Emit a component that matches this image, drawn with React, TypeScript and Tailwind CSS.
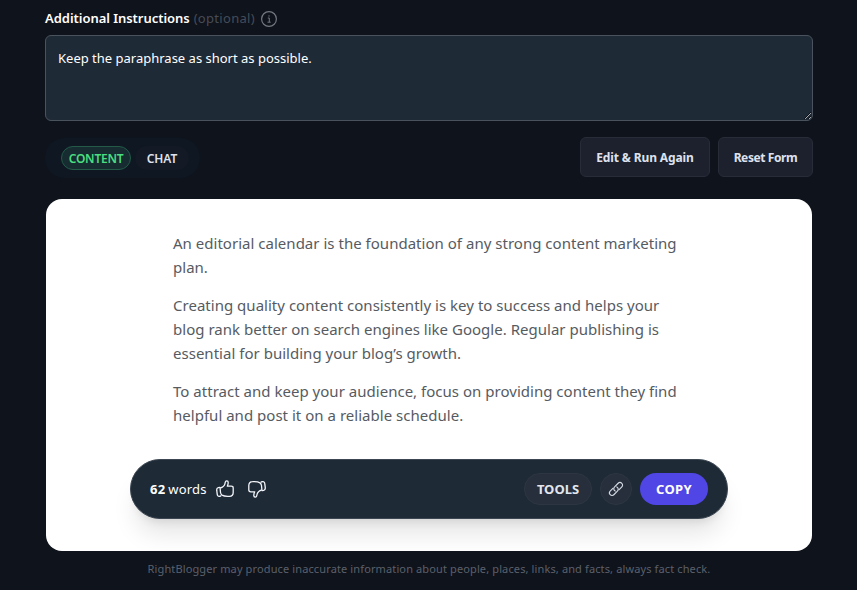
import React from 'react';

const paragraphs = [
  ['An editorial calendar is the foundation of any strong content marketing', 'plan.'],
  [
    'Creating quality content consistently is key to success and helps your',
    'blog rank better on search engines like Google. Regular publishing is',
    'essential for building your blog’s growth.',
  ],
  [
    'To attract and keep your audience, focus on providing content they find',
    'helpful and post it on a reliable schedule.',
  ],
];

function InfoIcon() {
  return (
    <svg className="ml-[6px] h-4 w-4" viewBox="0 0 16 16" fill="none" stroke="#74787f">
      <circle cx="8" cy="8" r="7.4" strokeWidth="1.2" />
      <path d="M6.8 7h1.500v4M6.500 11.200h3.200M8 4.300v1.300" />
    </svg>
  );
}

function ThumbIcon({ down = false }: { down?: boolean }) {
  return (
    <svg
      className={down ? 'h-[18px] w-[18px] rotate-180' : 'h-[18px] w-[18px]'}
      viewBox="0 0 18 18"
      fill="none"
      stroke="#f1f4f8"
      strokeWidth="1.3"
      strokeLinejoin="round"
      strokeLinecap="round"
    >
      <path d="M3.900 7.400 2.300 7.700C.9 8 .6 8.900.7 10.200l.5 4c.2 1.500.9 2.300 2.200 2.100l1.400-.3" />
      <path d="M4.100 8.100c2.600-.9 4.300-2.200 4.800-4.300l.4-1.700c.4-1.700 2.800-1.500 2.900.3.100 1.300-.3 2.500-.9 3.800h3.900c1.400 0 2 .8 2 1.700v4.500c0 2.400-1.300 3.800-3.700 3.900-2.900.2-5.600 0-7.500-1.200-1-.7-1.300-1.400-1.500-2.600Z" />
    </svg>
  );
}

function LinkIcon() {
  return (
    <svg className="h-4 w-4" viewBox="0 0 16 16" fill="none" stroke="#d5dae3" strokeWidth="1.15" strokeLinecap="round">
      <path d="M7.200 10.100C5.700 9.400 5.200 7.200 6.600 5.800l3.300-3.300c1.200-1.200 2.900-1.200 3.900-.2s1 2.700-.2 3.900l-2.500 2.500" />
      <path d="M8.800 5.900c1.500.7 2 2.900.6 4.300l-3.300 3.300c-1.200 1.200-2.900 1.200-3.900.2s-1-2.700.2-3.900l2.500-2.500" />
    </svg>
  );
}

export default function App() {
  return (
    <div className="h-[590px] w-[857px] overflow-hidden bg-[#0f131b] pr-[44px] pl-[45px] font-['Noto_Sans',sans-serif]">
      <div className="flex h-[35px] items-center pt-[3px] text-[13px]">
        <span className="font-semibold tracking-[-0.04px] text-white">Additional Instructions</span>
        <span className="ml-1 tracking-[0.3px] text-[#454c58]">(optional)</span>
        <InfoIcon />
      </div>

      <textarea
        className="block h-[86px] w-full resize-y rounded-md border border-[#4a535d] bg-[#1f2a37] px-3 py-3 text-[13px] leading-5 text-white outline-none"
        defaultValue="Keep the paraphrase as short as possible."
      />

      {/* Tabs and form actions */}
      <div className="mt-4 flex h-10 items-center justify-between">
        <div className="mt-[2px] flex h-10 w-[155px] items-center gap-1 rounded-full bg-[#0f1723] pl-4 text-xs font-semibold">
          <button className="h-6 w-[70px] rounded-full border border-[#235a48] bg-[#162c30] pt-px tracking-[-0.25px] text-[#4ade80]">
            CONTENT
          </button>
          <button className="h-6 w-[54px] rounded-full bg-[#131925] pt-px tracking-[-0.1px] text-[#dfe2ee]">CHAT</button>
        </div>
        <div className="flex gap-2 text-xs font-bold text-[#dfe2ee]">
          <button className="h-10 w-[130px] rounded-md border border-[#272c38] bg-[#1c212d] pt-px tracking-[-0.12px]">
            Edit &amp; Run Again
          </button>
          <button className="h-10 w-[95px] rounded-md border border-[#272c38] bg-[#1c212d] pt-px tracking-[-0.4px]">
            Reset Form
          </button>
        </div>
      </div>

      {/* Generated result */}
      <main className="mx-px mt-[22px] flex h-[352px] flex-col items-center overflow-hidden rounded-2xl bg-white pt-8">
        <div className="w-[512px] space-y-[14px] text-[15px] leading-6 tracking-[0.02px] text-[#565b62]">
          {paragraphs.map((lines) => (
            <p key={lines[0]} className="whitespace-pre-line">
              {lines.join('\n')}
            </p>
          ))}
        </div>

        <div className="mt-8 flex h-[60px] w-[598px] items-center justify-between rounded-full border border-[#3b4652] bg-[#1f2a37] px-[19px] shadow-xl">
          <div className="flex items-center text-[13px] text-white">
            <b className="pt-px tracking-[0.2px]">62</b>
            <span className="ml-[3px] pt-px tracking-[0.2px]">words</span>
            <div className="ml-[9px] flex gap-[14px]">
              <ThumbIcon />
              <ThumbIcon down />
            </div>
          </div>
          <div className="flex gap-2 text-[13px] font-bold">
            <button className="h-8 w-[68px] rounded-full border border-[#2d3542] bg-[#272f3c] pt-px text-[#e3e6ed]">TOOLS</button>
            <button className="flex h-8 w-8 items-center justify-center rounded-full border border-[#2d3542] bg-[#272f3c]">
              <LinkIcon />
            </button>
            <button className="h-8 w-[68px] rounded-full bg-[#4f46e5] pt-px tracking-[0.3px] text-white">COPY</button>
          </div>
        </div>
      </main>

      <p className="mt-[10px] text-center text-[11px] leading-4 tracking-[0.125px] text-[#5b606b]">
        RightBlogger may produce inaccurate information about people, places, links, and facts, always fact check.
      </p>
    </div>
  );
}
